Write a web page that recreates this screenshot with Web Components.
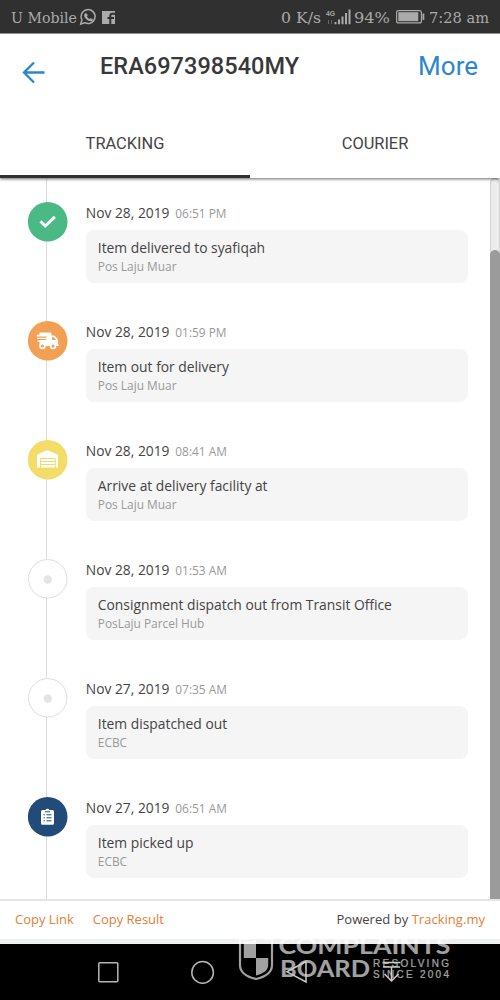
<!DOCTYPE html>
<html lang="en"><head><meta charset="utf-8"><title>Tracking</title>
<style>html,body{margin:0;height:100%;overflow:hidden;background:#fff}</style></head>
<body><tracking-app></tracking-app>
<script>
const define=(name,html,setup)=>customElements.define(name,class extends HTMLElement{
  constructor(){super();const t=document.createElement('template');t.innerHTML=html;
    this.attachShadow({mode:'open'}).append(t.content.cloneNode(true));}
  connectedCallback(){if(setup)setup(this,this.shadowRoot);}
});

define('status-bar',`<style>:host{display:block;height:34px;background:#303030;box-sizing:border-box;border-bottom:1px solid #8d8d8d}svg{display:block}text{font-family:"DejaVu Serif",serif;fill:#aaa}</style>
<svg width="500" height="33" viewBox="0 0 500 33">
<text x="11" y="22.5" font-size="14" textLength="66" lengthAdjust="spacingAndGlyphs">U Mobile</text>
<path d="M80.8 24l1.1-4.1a7 7 0 1 1 2.8 2.8z" fill="none" stroke="#aaa" stroke-width="1.5"/>
<path d="M85.5 13.2l1.4.2.8 2-.8 1.1c.7 1.2 1.5 2 2.8 2.6l1.1-.9 2 .9c.1 2-1.4 2.4-2.5 2.2-3.5-.8-5.8-3.2-6.2-5.8-.1-1 .6-2 1.4-2.3z" fill="#aaa"/>
<rect x="102" y="11" width="13" height="13" fill="#aaa"/><path d="M110.300 24v-8q0-2.200 2.200-2.200h2.500M107.500 18h6.500" fill="none" stroke="#303030" stroke-width="2"/>
<text x="281" y="22.500" font-size="14" textLength="40" lengthAdjust="spacingAndGlyphs">0 K/s</text>
<text x="326" y="15.500" style="font-family:'Liberation Sans',sans-serif" font-size="8" font-weight="700" textLength="9" lengthAdjust="spacingAndGlyphs">4G</text>
<path d="M328.500 20v4M331.500 20v4" stroke="#666" stroke-width="1"/>
<path d="M335.500 22v2.200M339 19.500v4.700M342.500 16.500v7.700M346 13v11.200M349.500 9.500v14.700" stroke="#aaa" stroke-width="2"/>
<text x="354" y="22.500" font-size="14" textLength="36" lengthAdjust="spacingAndGlyphs">94%</text>
<rect x="396.600" y="10.600" width="24.800" height="12.300" rx="2" fill="none" stroke="#aaa" stroke-width="1.200"/><rect x="398.300" y="12.200" width="20" height="9" fill="#aaa"/><rect x="422.500" y="13.500" width="1.800" height="6.500" fill="#aaa"/>
<text x="429" y="22.500" font-size="14" textLength="60" lengthAdjust="spacingAndGlyphs">7:28 am</text></svg>`);

define('app-header',`<style>:host{display:flex;height:74px;box-sizing:border-box;padding:0 22px;font-family:Roboto,sans-serif;align-items:flex-start}svg{margin-top:27px;width:23px;height:23px;flex:none}h1{margin:17px 0 0 55px;font-size:23.500px;line-height:30px;font-weight:500;color:#38383a;letter-spacing:.05px;flex:1}a{font-size:26px;line-height:30px;margin-top:17px;color:#2b86cf}</style>
<svg viewBox="0 0 23 23"><path d="M22.500 11.500H2M12 1.500L2 11.500l10 10" fill="none" stroke="#2b86cf" stroke-width="2.300"/></svg><h1><slot></slot></h1><a>More</a>`);

define('tab-bar',`<style>:host{display:grid;grid-template-columns:1fr 1fr;height:70px;position:relative;z-index:2;background:#fff;box-shadow:0 1px 3px #0009;clip-path:inset(0 0 -6px 0);font:16.400px/72px Roboto,sans-serif;color:#444;text-align:center}.on{border-bottom:3px solid #302f31;box-sizing:border-box;height:70px}</style><span class="on">TRACKING</span><span>COURIER</span>`);

const icons={
check:['#4bb986','<path d="M12.500 19.300l4.700 4.700 9.700-9.200" fill="none" stroke="#fff" stroke-width="3"/>'],
truck:['#f2a154','<path fill="#fff" d="M11.500 11.500h11q1 0 1 1v2h2.300q1 0 1.700.9l2 2.600q.5.700.5 1.500v4h.8v1.500h-16.500v-3.200h4.200v-1.100H9.600v-1.300h8.900v-1.300H9v-1.300h9.500v-1.300H8.800V13.800h2.700z"/><path d="M24 16.300h1.800l2.200 2.700h-4z" fill="#f2a154"/><path fill="#fff" d="M11.500 19h8v5h-8z"/><g fill="#f2a154" stroke="#fff" stroke-width="1.700"><circle cx="14.500" cy="25" r="2.400"/><circle cx="25" cy="25" r="2.400"/></g>'],
warehouse:['#f4dc68','<path fill="#fff" d="M9 27.500V15.800q0-.8.800-1.200l8.500-4q1-.5 2 0l9 4q.7.400.7 1.200v11.700z"/><path d="M12.500 28v-9.500h14.800V28M12.500 21.500h14.800M12.500 24.500h14.800" fill="none" stroke="#f4dc68" stroke-width="1"/>'],
dot:['#fff','<circle cx="19.800" cy="20.500" r="4.200" fill="#e4e4e4"/>'],
clipboard:['#214b78','<path fill="#fff" d="M14.500 13h3a2.200 2.200 0 0 1 4 0h3q1.500 0 1.500 1.500v11.800q0 1.500-1.500 1.500h-10q-1.500 0-1.500-1.500V14.500q0-1.500 1.500-1.500z"/><path d="M15.500 17.800h1.300M18.500 17.800h5M15.500 20.800h1.300M18.500 20.800h5M15.500 23.800h1.300M18.500 23.800h5M17 14.800h5" stroke="#214b78" stroke-width="1"/>']};
define('tracking-event',`<style>:host{display:grid;grid-template-columns:40px 382px;column-gap:18px;height:119.060px;font-family:"Open Sans",sans-serif;align-items:start}svg{width:40px;height:40px;display:block}.date{box-sizing:border-box;height:28.500px;padding-top:.7px;line-height:22px;font-size:13.800px;color:#444;white-space:nowrap}.date b{font-weight:400;display:inline-block;width:89.500px}.date small{font-size:11.900px;color:#999}.card{box-sizing:border-box;height:53px;background:#f5f5f5;border-radius:8px;padding:8px 12px}.title{font-size:13.850px;line-height:20px;color:#444}.place{font-size:11.900px;line-height:17px;color:#999}.body{margin-top:-.9px}</style>
<svg viewBox="0 0 40 40"></svg><div class="body"><div class="date"><b></b><small></small></div><div class="card"><div class="title"><slot></slot></div><div class="place"></div></div></div>`,(h,r)=>{
 const k=h.getAttribute('icon'),i=icons[k];
 r.querySelector('svg').innerHTML='<circle cx="19.700" cy="19.800" r="'+(k==='dot'?19.2:19.8)+'" fill="'+i[0]+'"'+(k==='dot'?' stroke="#dedede"':'')+'/>'+i[1];
 r.querySelector('b').textContent=h.getAttribute('date');r.querySelector('small').textContent=h.getAttribute('time');r.querySelector('.place').textContent=h.getAttribute('place');
});

define('event-timeline',`<style>:host{display:grid;grid-template-columns:480px 10px;justify-content:space-between;height:721px;overflow:hidden;background:#fff}.list{height:721px;box-sizing:border-box;padding:24px 0 0 27.800px;background:linear-gradient(#ddd,#ddd) 46px 0/1px 100% no-repeat}.scroll{display:flow-root;height:721px;background:#ececec;border-radius:6px 6px 0 0;box-shadow:inset 0 0 2px #999}.thumb{height:649px;margin-top:72px;border-radius:5px 5px 0 0;background:#9b9b9b}</style><div class="list"><slot></slot></div><div class="scroll"><div class="thumb"></div></div>`);

define('app-footer',`<style>:host{display:flex;box-sizing:border-box;height:45px;padding:0 15px;border-top:2px solid #e5e5e5;border-bottom:5px solid #eff1f1;font:13px/36px "Open Sans",sans-serif;color:#444;background:#fff}a{color:#df8136}.copy{margin-right:19px}.power{margin-left:auto;letter-spacing:.03px}</style><a class="copy">Copy Link</a><a>Copy Result</a><span class="power">Powered by <a>Tracking.my</a></span>`);

define('nav-bar',`<style>:host{display:block;height:56px;background:#000;position:relative}svg{display:block;position:absolute;left:0;top:-10px}text{font-family:Lato,sans-serif}</style>
<svg width="500" height="66" viewBox="0 934 500 66">
<g fill="none" stroke="#b5b5b5" stroke-width="1.500"><rect x="98.800" y="962.800" width="19" height="19" rx="1"/><circle cx="202.600" cy="972.400" r="10.800"/></g>
<g fill="#fff" opacity=".63"><path d="M240 939.500q9.500-.5 16-3 6.500 2.500 16 3V965c0 7-6.500 11.800-16 14-9.500-2.200-16-7-16-14z" fill="none" stroke="#fff" stroke-width="2.200"/>
<path d="M243.800 942q7-.5 12.200-2.500v18.500h-12.200zM256 958h12.200v7c0 5-4.200 8.500-12.200 10.500z"/>
<text x="278.500" y="954.300" font-size="22.500" font-weight="700" textLength="172" lengthAdjust="spacingAndGlyphs">COMPLAINTS</text>
<text x="280" y="977" font-size="23.500" font-weight="700" textLength="90" lengthAdjust="spacingAndGlyphs">BOARD</text>
<text style="font-family:'Liberation Sans',sans-serif" x="373" y="967" font-size="10" textLength="76" stroke="#fff" stroke-width=".2">RESOLVING</text><text style="font-family:'Liberation Sans',sans-serif" x="373" y="977.500" font-size="10" textLength="76" stroke="#fff" stroke-width=".2">SINCE 2004</text></g>
<g fill="none" stroke="#ccc" stroke-width="1.500"><path d="M306 961.500v20.500l-19-10.200z"/><path d="M382.500 962.500h18M383 967h17M391.500 967v13M384.500 974l7 7 7-7"/></g></svg>`);

define('tracking-app',`<style>:host{display:flex;flex-direction:column;width:500px;height:1000px;background:#fff;overflow:hidden}</style>
<status-bar></status-bar><app-header>ERA697398540MY</app-header><tab-bar></tab-bar>
<event-timeline>
<tracking-event icon="check" date="Nov 28, 2019" time="06:51 PM" place="Pos Laju Muar">Item delivered to syafiqah</tracking-event>
<tracking-event icon="truck" date="Nov 28, 2019" time="01:59 PM" place="Pos Laju Muar">Item out for delivery</tracking-event>
<tracking-event icon="warehouse" date="Nov 28, 2019" time="08:41 AM" place="Pos Laju Muar">Arrive at delivery facility at</tracking-event>
<tracking-event icon="dot" date="Nov 28, 2019" time="01:53 AM" place="PosLaju Parcel Hub">Consignment dispatch out from Transit Office</tracking-event>
<tracking-event icon="dot" date="Nov 27, 2019" time="07:35 AM" place="ECBC">Item dispatched out</tracking-event>
<tracking-event icon="clipboard" date="Nov 27, 2019" time="06:51 AM" place="ECBC">Item picked up</tracking-event>
</event-timeline><app-footer></app-footer><nav-bar></nav-bar>`);
</script></body></html>
